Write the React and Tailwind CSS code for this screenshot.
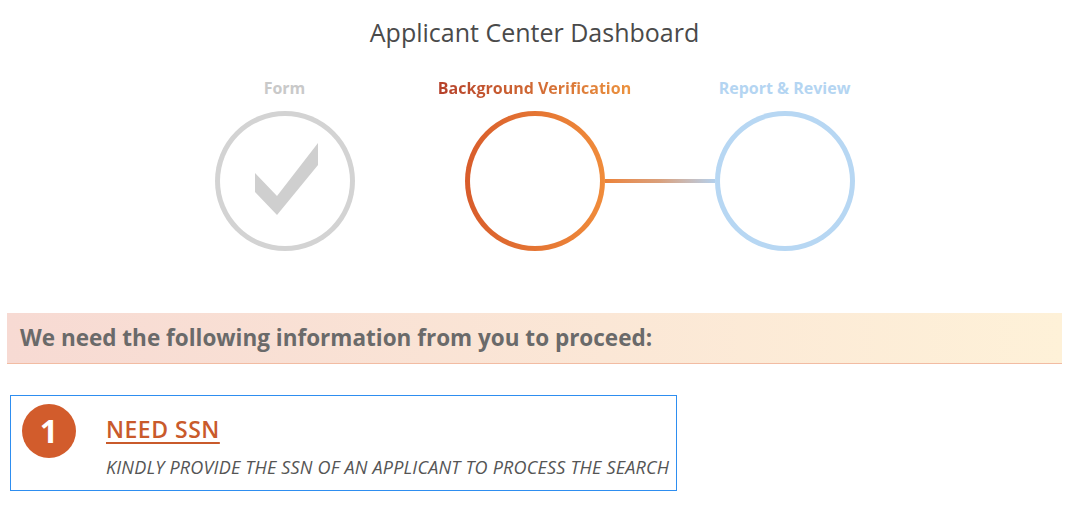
import React from "react";

const font = { fontFamily: '"Open Sans", "Noto Sans", sans-serif' };

const CheckMark = () => (
  <svg width="130" height="130" viewBox="0 0 130 130" className="absolute left-0 top-0">
    <polygon points="35,57 57,80 98,27 98,49 57,99 35,76" fill="#cfcfcf" />
  </svg>
);

const Step = ({ label, labelClass, circleClass, children }) => (
  <div className="flex flex-col items-center w-[140px]">
    <div className={`whitespace-nowrap text-[16px] font-bold leading-[20px] h-[20px] ${labelClass}`}>{label}</div>
    <div className={`relative mt-[13px] w-[140px] h-[140px] rounded-full p-[5px] ${circleClass}`}>
      <div className="relative w-full h-full rounded-full bg-white">{children}</div>
    </div>
  </div>
);

export default function App() {
  return (
    <div className="min-h-screen bg-white pl-[7px] pr-[18px]" style={font}>
      <h1 className="pt-[16px] text-center text-[25px] leading-[32px] text-[#4a4a4a]">Applicant Center Dashboard</h1>

      <div className="mt-[30px] flex items-start justify-center">
        <Step label="Form" labelClass="text-[#c9c9c9]" circleClass="bg-[#d3d3d3]">
          <CheckMark />
        </Step>
        <div className="w-[110px]" />
        <Step
          label="Background Verification"
          labelClass="bg-gradient-to-r from-[#b5402a] to-[#ec923e] bg-clip-text text-transparent"
          circleClass="bg-gradient-to-r from-[#d85c2b] to-[#f08c3b]"
        />
        <div className="mt-[101px] h-[4px] w-[110px] bg-gradient-to-r from-[#ec8236] via-[#d9a07c] to-[#b3d0ec]" />
        <Step label="Report & Review" labelClass="text-[#b4d5f2]" circleClass="bg-[#b7d7f3]" />
      </div>

      <div className="mt-[62px] flex h-[51px] items-center border-b border-[#f2bca3] bg-gradient-to-r from-[#f7dad3] to-[#fef1d8] pl-[13px]">
        <p className="text-[22.5px] font-bold text-[#6a6a6a]">We need the following information from you to proceed:</p>
      </div>

      <div className="ml-[3px] mt-[31px] flex h-[96px] w-[667px] items-start border-[1.5px] border-[#2e8ef0] pl-[11px] pt-[8px]">
        <div className="flex h-[54px] w-[54px] shrink-0 items-center justify-center rounded-full bg-[#d25c2c] text-[32px] font-bold text-white">
          1
        </div>
        <div className="ml-[30px] pt-[11px]">
          <div className="text-[23px] font-semibold leading-[28px] tracking-[0.5px] text-[#c95a2b] underline decoration-[1.5px] underline-offset-[4px]">NEED SSN</div>
          <div className="mt-[13px] text-[18px] italic leading-[22px] tracking-[0.2px] text-[#555]">
            KINDLY PROVIDE THE SSN OF AN APPLICANT TO PROCESS THE SEARCH
          </div>
        </div>
      </div>
    </div>
  );
}
